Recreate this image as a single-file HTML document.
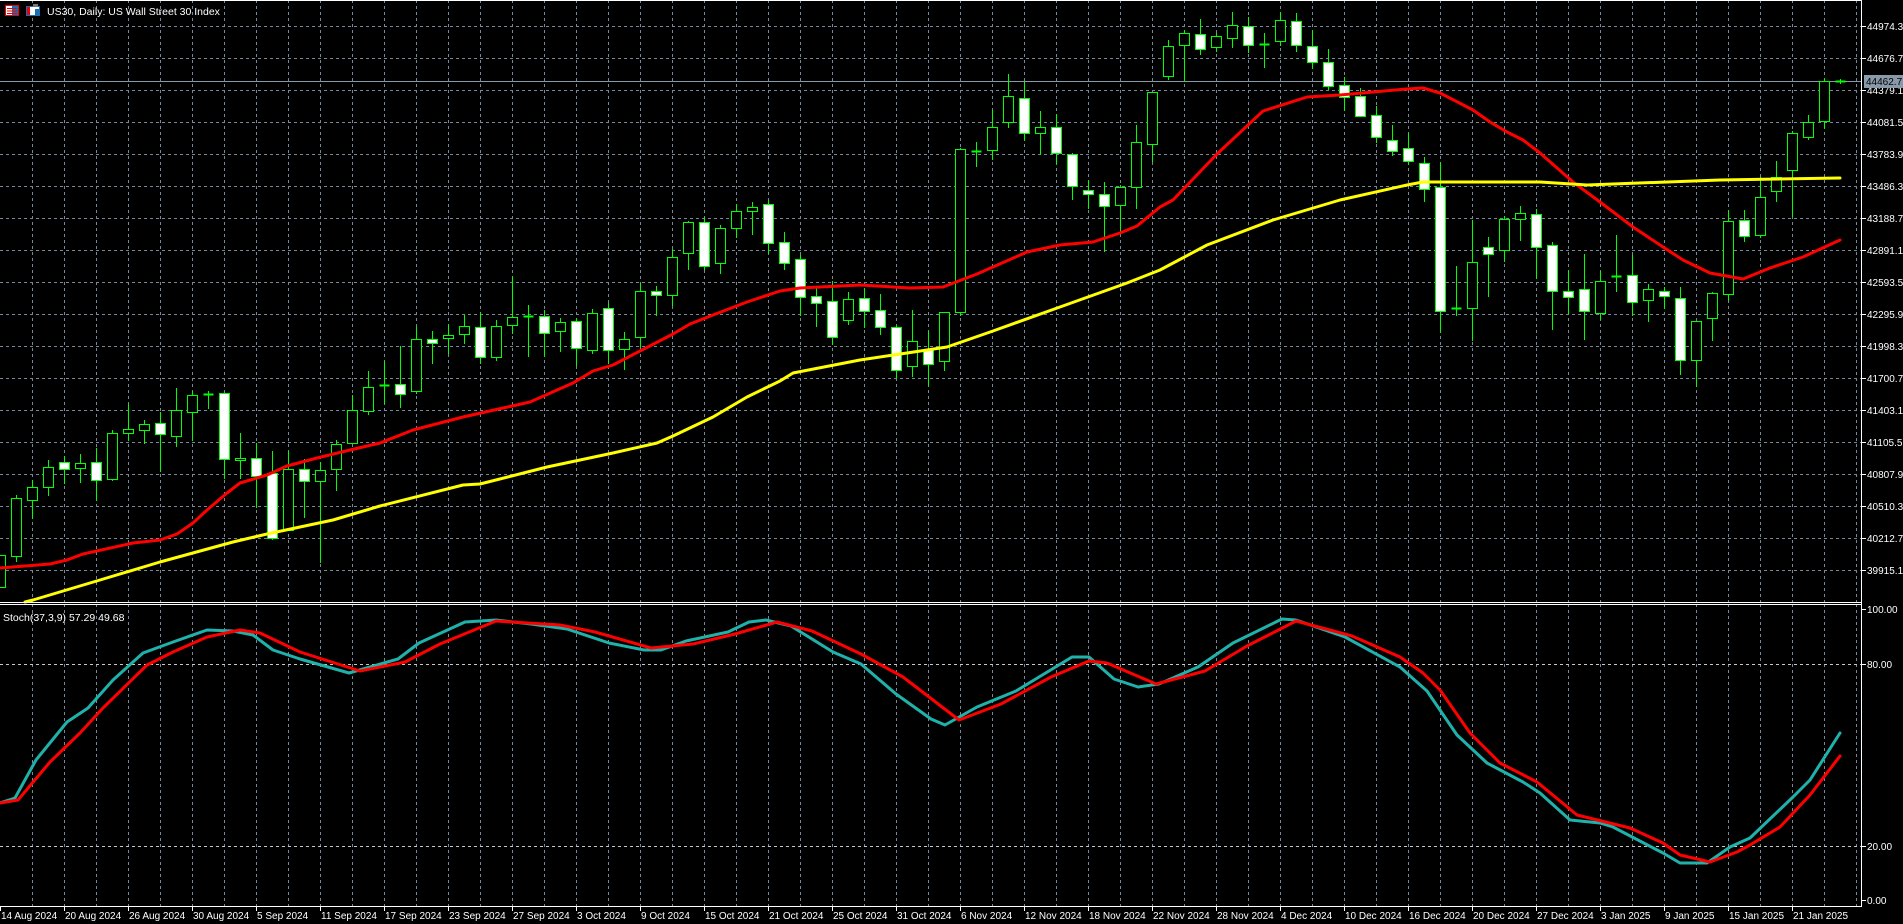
<!DOCTYPE html>
<html><head><meta charset="utf-8">
<style>
html,body{margin:0;padding:0;background:#000;width:1903px;height:924px;overflow:hidden}
svg{display:block}
text{font-family:"Liberation Sans","DejaVu Sans",sans-serif;font-size:10px;fill:#fff}
</style></head>
<body>
<svg id="s" width="1903" height="924" xmlns="http://www.w3.org/2000/svg">
<rect width="1903" height="924" fill="#000"/>
<g id="grid"></g>
<g id="cand"></g>
<g id="lines"></g>
<g id="axes"></g>
<!-- title -->
<g>
<rect x="5.5" y="5.5" width="13" height="10" fill="#fff" stroke="#e00" stroke-width="1"/>
<rect x="12" y="6" width="6" height="9" fill="#1a6fb5"/>
<line x1="7" y1="8.5" x2="17" y2="8.5" stroke="#e00"/><line x1="7" y1="11" x2="17" y2="11" stroke="#e00"/><line x1="7" y1="13.5" x2="17" y2="13.5" stroke="#e00"/>
<rect x="26.5" y="6.5" width="13" height="9" fill="#fff" stroke="#1a6fb5"/>
<rect x="27" y="7" width="3" height="8" fill="#e00"/>
<rect x="33" y="4" width="5" height="3" fill="#777"/>
<rect x="35" y="9" width="4" height="6" fill="#1a6fb5"/>
<text x="47" y="15" style="font-size:10.5px">US30, Daily:  US Wall Street 30 Index</text>
<text x="3" y="621" style="font-size:10.5px">Stoch(37,3,9) 57.29 49.68</text>
</g>
</svg>
<script>
var NS="http://www.w3.org/2000/svg";
function el(p,t,a){var e=document.createElementNS(NS,t);for(var k in a)e.setAttribute(k,a[k]);p.appendChild(e);return e;}
var G=document.getElementById('grid'),C=document.getElementById('cand'),L=document.getElementById('lines'),A=document.getElementById('axes');
var gc="#778899";
// vertical grid
for(var x=32;x<1861;x+=32){
 el(G,'line',{x1:x+.5,y1:0,x2:x+.5,y2:602,stroke:gc,'stroke-dasharray':'3,3'});
 el(G,'line',{x1:x+.5,y1:604,x2:x+.5,y2:906,stroke:gc,'stroke-dasharray':'3,3'});
}
for(var k=0;k<18;k++){var y=26+32*k;
 el(G,'line',{x1:0,y1:y+.5,x2:1861,y2:y+.5,stroke:gc,'stroke-dasharray':'3,3'});
}
el(G,'line',{x1:0,y1:664.5,x2:1861,y2:664.5,stroke:"#c8c8c8",'stroke-dasharray':'3,3'});
el(G,'line',{x1:0,y1:846.5,x2:1861,y2:846.5,stroke:"#c8c8c8",'stroke-dasharray':'3,3'});
// current price line
el(G,'line',{x1:0,y1:81.5,x2:1861,y2:81.5,stroke:"#8899aa"});
// candles
var D=[[555,587,555,587,'u'],[498,556,495,561,'u'],[487,500,480,518,'u'],[467,487,460,495,'u'],[462,469,456,483,'d'],[463,468,454,482,'u'],[462,480,448,500,'d'],[433,479,430,480,'u'],[429,433,404,440,'u'],[424,430,420,443,'u'],[423,434,412,471,'d'],[410,436,388,446,'u'],[395,412,391,440,'u'],[394,394,391,408,'x'],[393,459,393,478,'d'],[458,460,433,478,'u'],[458,476,443,507,'d'],[473,538,451,539,'d'],[469,530,451,530,'u'],[469,481,459,517,'d'],[470,481,462,562,'u'],[444,469,440,490,'u'],[410,443,395,443,'u'],[387,411,371,414,'u'],[385,385,361,403,'x'],[384,394,346,407,'d'],[339,391,327,393,'u'],[339,343,331,363,'d'],[335,338,324,353,'u'],[326,334,315,343,'u'],[327,357,312,363,'d'],[326,357,320,360,'u'],[317,325,276,333,'u'],[316,316,305,356,'x'],[316,333,310,356,'d'],[322,331,318,351,'u'],[321,348,318,365,'d'],[313,350,309,353,'u'],[308,350,303,363,'d'],[339,349,332,369,'u'],[291,337,283,347,'u'],[291,295,286,315,'d'],[257,295,249,305,'u'],[222,253,221,269,'u'],[222,266,217,269,'d'],[228,263,225,273,'u'],[211,228,204,237,'u'],[207,211,202,234,'u'],[204,243,200,253,'d'],[242,263,232,269,'d'],[259,297,255,315,'d'],[296,303,288,326,'d'],[301,337,281,344,'d'],[299,320,292,324,'u'],[298,311,288,327,'d'],[310,327,294,334,'d'],[327,370,325,378,'d'],[341,366,310,376,'u'],[349,364,331,385,'d'],[312,361,312,370,'u'],[149,312,148,315,'u'],[151,151,142,166,'x'],[127,150,110,159,'u'],[96,122,74,127,'u'],[98,133,82,140,'d'],[127,133,111,154,'u'],[127,153,114,163,'d'],[154,186,153,199,'d'],[190,194,180,208,'d'],[194,206,182,251,'d'],[187,205,185,231,'u'],[142,187,125,208,'u'],[92,144,92,161,'u'],[46,76,40,79,'u'],[33,45,30,81,'u'],[34,49,19,54,'d'],[36,47,33,51,'u'],[25,38,12,47,'u'],[26,45,17,52,'d'],[44,44,33,67,'x'],[20,41,12,45,'u'],[21,45,13,51,'d'],[46,62,30,68,'d'],[62,86,49,89,'d'],[85,97,77,110,'d'],[96,116,88,116,'d'],[115,137,106,142,'d'],[140,151,125,155,'d'],[148,161,133,164,'d'],[163,189,157,201,'d'],[187,311,162,332,'d'],[308,308,266,315,'x'],[262,308,220,340,'u'],[247,254,237,296,'d'],[219,250,216,261,'u'],[213,219,206,240,'u'],[214,247,209,278,'d'],[245,291,242,329,'d'],[291,297,270,313,'d'],[289,311,254,339,'d'],[281,313,271,319,'u'],[276,276,235,291,'x'],[275,302,255,315,'d'],[289,300,284,321,'u'],[291,296,287,308,'d'],[298,360,287,374,'d'],[321,360,321,386,'u'],[293,318,292,340,'u'],[221,294,210,300,'u'],[220,236,210,241,'d'],[197,235,177,237,'u'],[177,191,161,201,'u'],[133,170,131,216,'u'],[122,137,115,139,'u'],[81,121,78,128,'u'],[81,81,79,83,'x']];
var g="#00ff00";
D.forEach(function(d,i){
 var x=16*i+.5;
 el(C,'line',{x1:x,y1:d[2],x2:x,y2:d[3]+1,stroke:g});
 if(d[4]=='x'){el(C,'line',{x1:x-5,y1:d[0]+.5,x2:x+5,y2:d[0]+.5,stroke:g,'stroke-width':2});}
 else el(C,'rect',{x:x-5,y:d[0]+.5,width:10,height:Math.max(1,d[1]-d[0]),fill:d[4]=='d'?'#fff':'#000',stroke:g});
});
function pl(pts,col,w){el(L,'polyline',{points:pts.map(function(p){return p[0]+','+p[1]}).join(' '),fill:'none',stroke:col,'stroke-width':w,'stroke-linejoin':'round','stroke-linecap':'round'});}
var red=[[0,568],[50,564],[67,560],[83,554],[133,543],[160,540],[177,534],[193,523],[207,510],[227,493],[240,483],[267,475],[287,466],[317,458],[350,450],[380,443],[413,430],[463,417],[530,402],[573,383],[593,371],[613,365],[640,351],[673,334],[690,324],[713,315],[747,302],[780,291],[800,288],[860,285],[910,288],[943,287],[977,274],[1027,252],[1060,245],[1093,242],[1120,233],[1137,226],[1160,207],[1173,200],[1217,154],[1263,111],[1307,97],[1340,95],[1407,89],[1423,88],[1440,93],[1473,110],[1490,122],[1507,132],[1523,140],[1540,153],[1573,182],[1600,202],[1633,227],[1663,247],[1683,260],[1710,273],[1743,279],[1770,268],[1803,257],[1840,240]];
var yel=[[25,602],[33,600],[100,580],[160,562],[233,542],[267,534],[333,520],[380,506],[463,485],[480,484],[547,467],[613,453],[657,443],[673,436],[713,417],[747,397],[780,381],[793,373],[860,360],[927,350],[947,347],[993,331],[1060,307],[1127,283],[1160,270],[1207,245],[1273,220],[1340,200],[1407,185],[1423,182],[1540,182],[1587,185],[1720,180],[1840,178]];
pl(red,'#ff0000',3);pl(yel,'#ffff00',3);
var teal=[[0,803],[15,798],[36,760],[67,722],[88,708],[113,680],[143,653],[173,642],[207,630],[233,631],[253,635],[273,650],[300,659],[349,673],[398,659],[419,643],[465,622],[496,620],[531,624],[567,629],[609,643],[644,650],[661,650],[686,641],[728,632],[749,622],[766,620],[791,626],[833,652],[861,664],[896,694],[931,719],[945,725],[977,707],[1016,691],[1044,674],[1072,657],[1089,657],[1114,679],[1138,687],[1159,684],[1198,667],[1233,643],[1282,619],[1296,620],[1345,637],[1400,667],[1427,691],[1457,735],[1487,763],[1523,782],[1540,793],[1570,820],[1600,823],[1613,827],[1663,853],[1680,863],[1707,863],[1730,847],[1750,838],[1793,797],[1810,780],[1840,733]];
var rs=[[0,803],[18,800],[50,762],[80,733],[103,708],[147,665],[173,652],[207,637],[240,630],[260,633],[300,652],[360,671],[405,662],[440,644],[496,621],[560,625],[595,632],[651,648],[693,644],[735,634],[777,622],[812,631],[861,654],[903,677],[959,720],[1001,704],[1051,677],[1089,661],[1107,663],[1156,684],[1205,671],[1247,646],[1296,621],[1352,636],[1400,657],[1423,673],[1440,690],[1470,733],[1500,763],[1537,782],[1577,815],[1630,828],[1663,843],[1680,855],[1710,862],[1737,852],[1750,845],[1780,827],[1810,795],[1840,756]];
pl(teal,'#20b2aa',3);pl(rs,'#ff0000',3);
// borders
el(A,'rect',{x:1861,y:0,width:42,height:924,fill:'#000'});
el(A,'rect',{x:0,y:906,width:1903,height:18,fill:'#000'});
el(A,'line',{x1:0,y1:602.5,x2:1861,y2:602.5,stroke:'#fff'});
el(A,'line',{x1:0,y1:604.5,x2:1861,y2:604.5,stroke:'#fff'});
el(A,'line',{x1:0,y1:906.5,x2:1862,y2:906.5,stroke:'#fff'});
el(A,'line',{x1:1861.5,y1:0,x2:1861.5,y2:907,stroke:'#fff'});
el(A,'line',{x1:0,y1:0.5,x2:1861,y2:0.5,stroke:'#fff'});
for(var k=0;k<18;k++){var y=26+32*k,v=(44974.3-297.6*k).toFixed(1);
 el(A,'line',{x1:1862,y1:y+.5,x2:1866,y2:y+.5,stroke:'#fff'});
 var t=el(A,'text',{x:1867,y:y+4});t.textContent=v;}
el(A,'rect',{x:1864,y:75,width:39,height:13,fill:'#8899aa'});
var t=el(A,'text',{x:1866,y:85,style:'fill:#000'});t.textContent='44462.7';
[[609,'100.00'],[664,'80.00'],[846,'20.00'],[900,'0.00']].forEach(function(a){
 el(A,'line',{x1:1862,y1:a[0]+.5,x2:1866,y2:a[0]+.5,stroke:'#fff'});
 var t=el(A,'text',{x:1867,y:a[0]+4});t.textContent=a[1];});
var dates=["14 Aug 2024","20 Aug 2024","26 Aug 2024","30 Aug 2024","5 Sep 2024","11 Sep 2024","17 Sep 2024","23 Sep 2024","27 Sep 2024","3 Oct 2024","9 Oct 2024","15 Oct 2024","21 Oct 2024","25 Oct 2024","31 Oct 2024","6 Nov 2024","12 Nov 2024","18 Nov 2024","22 Nov 2024","28 Nov 2024","4 Dec 2024","10 Dec 2024","16 Dec 2024","20 Dec 2024","27 Dec 2024","3 Jan 2025","9 Jan 2025","15 Jan 2025","21 Jan 2025"];
dates.forEach(function(d,i){var x=64*i;
 el(A,'line',{x1:x+.5,y1:907,x2:x+.5,y2:911,stroke:'#fff'});
 var t=el(A,'text',{x:x+1,y:919});t.textContent=d;});
</script>
</body></html>
